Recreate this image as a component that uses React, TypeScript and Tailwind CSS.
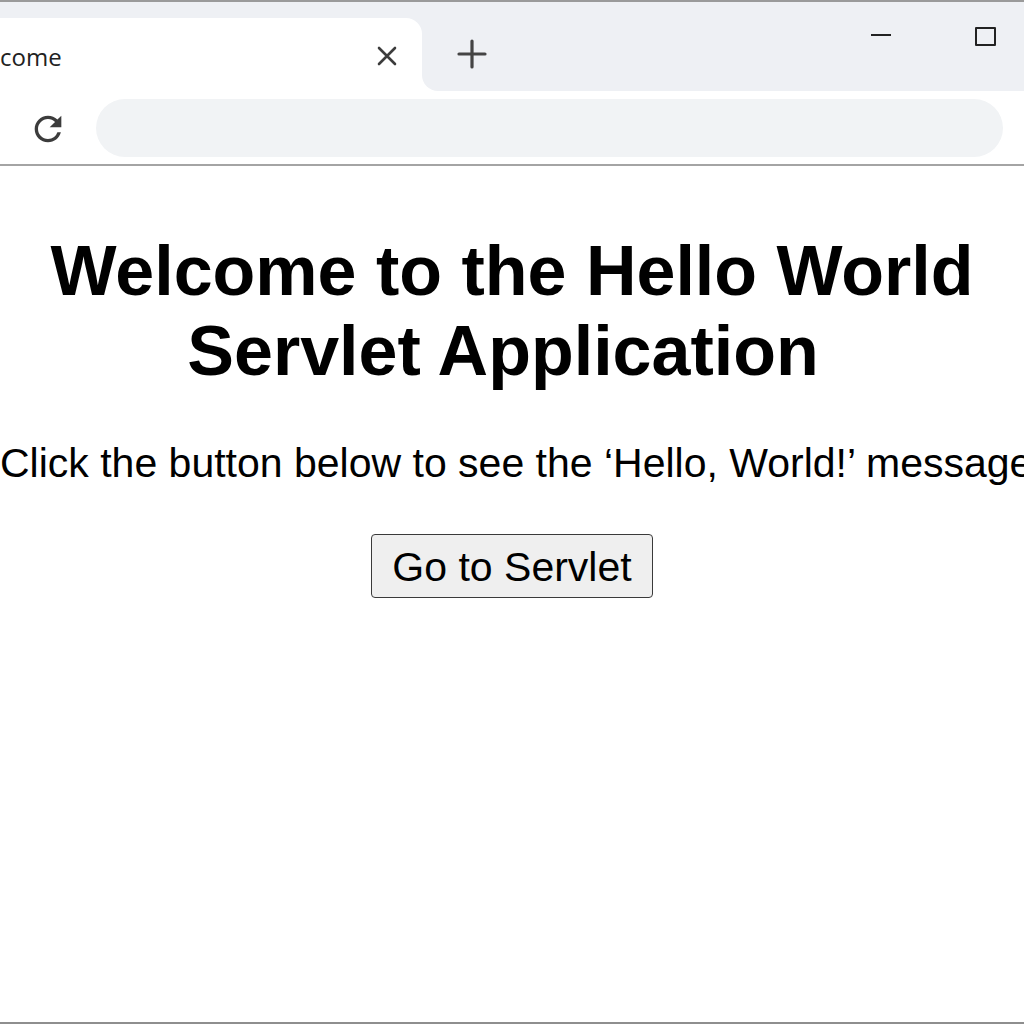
import React from "react";

function CloseIcon() {
  return (
    <svg width="20" height="20" viewBox="0 0 20 20" fill="none">
      <path d="M2 2 L18 18 M18 2 L2 18" stroke="#3c3c3c" strokeWidth="2.6" strokeLinecap="round" />
    </svg>
  );
}

function PlusIcon() {
  return (
    <svg width="30" height="30" viewBox="0 0 30 30" fill="none">
      <path d="M15 2 V28 M2 15 H28" stroke="#444" strokeWidth="3.2" strokeLinecap="round" />
    </svg>
  );
}

function ReloadIcon() {
  return (
    <svg width="40" height="40" viewBox="0 0 24 24">
      <path
        fill="#3c3c3c"
        d="M17.65 6.35A7.958 7.958 0 0 0 12 4c-4.42 0-7.99 3.58-7.99 8s3.57 8 7.99 8c3.73 0 6.84-2.55 7.73-6h-2.08A5.99 5.99 0 0 1 12 18c-3.31 0-6-2.69-6-6s2.69-6 6-6c1.66 0 3.14.69 4.22 1.78L13 11h7V4l-2.35 2.35z"
      />
    </svg>
  );
}

export default function App() {
  return (
    <div className="w-[1024px] h-[1024px] overflow-hidden bg-white flex flex-col border-b-2 border-[#8e8e8e]">
      {/* Tab strip */}
      <div className="h-[91px] shrink-0 border-t-2 border-[#9a9a9a] bg-[#eef0f4] flex items-end">
        <div className="w-[422px] h-[73px] bg-white rounded-tr-[16px] flex items-center relative">
          <span
            className="text-[24px] text-[#222] leading-none mt-[4px]"
            style={{ fontFamily: '"Open Sans", "Noto Sans", sans-serif' }}
          >
            come
          </span>
          <div className="absolute left-[377px] top-[28px]">
            <CloseIcon />
          </div>
        </div>
        <div className="flex-1 h-full bg-white">
          <div className="h-full bg-[#eef0f4] rounded-bl-[16px] relative">
            <div className="absolute left-[35px] top-[37px]">
              <PlusIcon />
            </div>
            <div className="absolute left-[449px] top-[32px] w-[20px] h-[2px] bg-[#222]" />
            <div className="absolute left-[553px] top-[25px] w-[21px] h-[19px] border-2 border-[#222] rounded-[1px]" />
          </div>
        </div>
      </div>

      {/* Toolbar */}
      <div className="h-[75px] shrink-0 bg-white border-b-2 border-[#a4a4a4] flex items-center">
        <div className="w-[96px] h-full flex items-center justify-center">
          <div className="-ml-[1px] mt-[2px]">
            <ReloadIcon />
          </div>
        </div>
        <div className="w-[907px] h-[58px] mt-[1px] rounded-full bg-[#f1f3f5]" />
      </div>

      {/* Page content */}
      <div className="flex-1 flex flex-col items-center" style={{ fontFamily: '"Liberation Sans", Arial, sans-serif' }}>
        <h1 className="mt-[65px] text-[70px] leading-[80px] font-bold text-black text-center w-[960px]">
          Welcome to the Hello World
          <br />
          <span className="-ml-[18px]">Servlet Application</span>
        </h1>
        <p className="mt-[48px] w-full pl-0 text-[41px] leading-[48px] text-black whitespace-nowrap overflow-hidden">
          Click the button below to see the ‘Hello, World!’ message
        </p>
        <button className="mt-[47px] w-[282px] h-[64px] bg-[#efefef] border border-[#3a3a3a] rounded-[4px] text-[41px] leading-[46px] text-black flex items-center justify-center pt-[1px]">
          Go to Servlet
        </button>
      </div>
    </div>
  );
}
